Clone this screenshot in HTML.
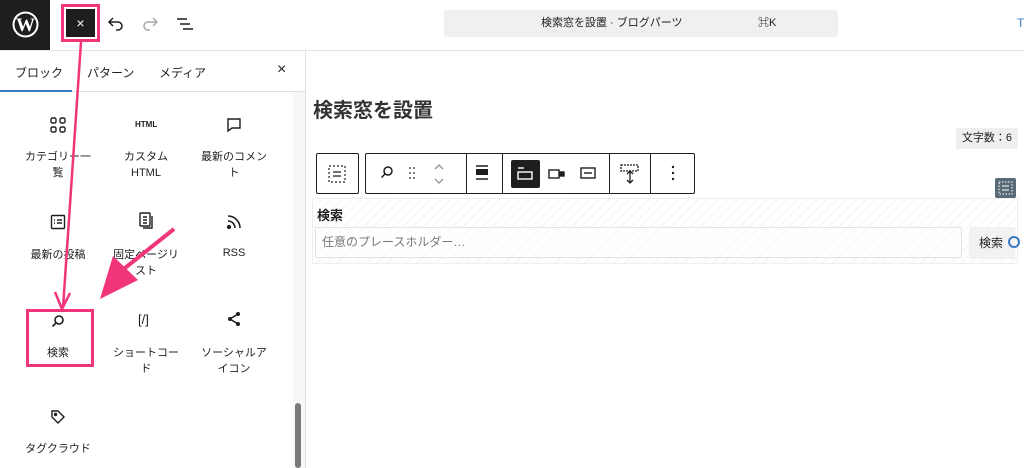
<!DOCTYPE html>
<html><head><meta charset="utf-8"><style>
*{box-sizing:border-box;margin:0;padding:0}
body{width:1024px;height:468px;overflow:hidden;background:#fff;font-family:"Liberation Sans","Noto Sans CJK JP",sans-serif;color:#1e1e1e;position:relative}
.a{position:absolute}
.lbl{position:absolute;width:90px;text-align:center;font-size:11px;line-height:16px;color:#1e1e1e}
.ic{position:absolute}
</style></head><body>
<div class="a" style="left:0;top:0;width:50px;height:50px;background:#1e1e1e"></div>
<svg class="a" style="left:11px;top:10px" width="29" height="29" viewBox="0 0 29 29"><circle cx="14.5" cy="14.5" r="13" fill="#fff"/><circle cx="14.5" cy="14.5" r="11" fill="#1e1e1e"/><text x="14.5" y="21" text-anchor="middle" font-family="Liberation Serif" font-weight="bold" font-size="19" fill="#fff">W</text></svg>
<div class="a" style="left:61px;top:4px;width:39px;height:38px;border:3px solid #f0357a"></div>
<div class="a" style="left:66px;top:9px;width:29px;height:28px;background:#1e1e1e;color:#fff;font-size:14px;text-align:center;line-height:28px">×</div>
<svg class="a" style="left:106px;top:15px" width="20" height="18" viewBox="0 0 20 18"><path d="M4 7h8a4 4 0 0 1 0 8h-2M7 3L3 7l4 4" fill="none" stroke="#1e1e1e" stroke-width="1.5"/></svg>
<svg class="a" style="left:140px;top:15px" width="20" height="18" viewBox="0 0 20 18"><path d="M16 7H8a4 4 0 0 0 0 8h2M13 3l4 4-4 4" fill="none" stroke="#aaa" stroke-width="1.5"/></svg>
<svg class="a" style="left:175px;top:16px" width="20" height="16" viewBox="0 0 20 16"><path d="M2 3h10M5 8h10M8 13h10" stroke="#1e1e1e" stroke-width="1.5"/></svg>
<div class="a" style="left:444px;top:10px;width:394px;height:27px;background:#f0f0f0;border-radius:3px;font-size:11px;line-height:27px;color:#1e1e1e"><span class="a" style="left:97px">検索窓を設置 · ブログパーツ</span><span class="a" style="left:314px">⌘K</span></div>
<div class="a" style="left:1017px;top:16px;color:#3a7ac4;font-size:12px">T</div>
<div class="a" style="left:0;top:50px;width:1024px;height:1px;background:#e4e4e4"></div>
<div class="a" style="left:305px;top:50px;width:1px;height:418px;background:#e0e0e0"></div>
<div class="a" style="left:293px;top:92px;width:12px;height:376px;background:#f7f7f7"></div>
<div class="a" style="left:295px;top:403px;width:6px;height:65px;background:#7a7a7a;border-radius:3px"></div>
<div class="a" style="left:15px;top:64px;font-size:12px">ブロック</div>
<div class="a" style="left:87px;top:64px;font-size:12px">パターン</div>
<div class="a" style="left:159px;top:64px;font-size:12px">メディア</div>
<div class="a" style="left:277px;top:61px;font-size:16px">×</div>
<div class="a" style="left:0;top:91px;width:305px;height:1px;background:#e0e0e0"></div>
<div class="a" style="left:0;top:90px;width:72px;height:2px;background:#3a7ac4"></div>
<svg class="ic" style="left:50px;top:117px" width="16" height="16" viewBox="0 0 16 16" fill="none" stroke="#1e1e1e" stroke-width="1.4"><rect x="1" y="1" width="5" height="5" rx="1.5"/><rect x="10" y="1" width="5" height="5" rx="1.5"/><rect x="1" y="10" width="5" height="5" rx="1.5"/><rect x="10" y="10" width="5" height="5" rx="1.5"/></svg>
<div class="a" style="left:135px;top:120px;font-size:8px;font-weight:bold">HTML</div>
<svg class="ic" style="left:226px;top:117px" width="16" height="16" viewBox="0 0 16 16" fill="none" stroke="#1e1e1e" stroke-width="1.4"><path d="M2 2h12v9H6l-4 3z"/></svg>
<div class="lbl" style="left:13px;top:149px">カテゴリー一<br>覧</div>
<div class="lbl" style="left:101px;top:149px">カスタム<br>HTML</div>
<div class="lbl" style="left:189px;top:149px">最新のコメン<br>ト</div>
<svg class="ic" style="left:50px;top:214px" width="16" height="16" viewBox="0 0 16 16" fill="none" stroke="#1e1e1e" stroke-width="1.4"><rect x="1.5" y="1.5" width="13" height="13" rx="1"/><path d="M4 6h1M7 6h5M4 9h1M7 9h5"/></svg>
<svg class="ic" style="left:138px;top:212px" width="16" height="18" viewBox="0 0 16 18" fill="none" stroke="#1e1e1e" stroke-width="1.4"><rect x="2" y="1" width="10" height="13" rx="1"/><path d="M5 5h4M5 8h4M5 11h4M14 4v12H5"/></svg>
<svg class="ic" style="left:226px;top:214px" width="16" height="16" viewBox="0 0 16 16" fill="none" stroke="#1e1e1e" stroke-width="1.6"><path d="M2 7a7 7 0 0 1 7 7M2 2a12 12 0 0 1 12 12"/><circle cx="3" cy="13" r="1.3" fill="#1e1e1e"/></svg>
<div class="lbl" style="left:13px;top:247px">最新の投稿</div>
<div class="lbl" style="left:101px;top:247px">固定ページリ<br>スト</div>
<div class="lbl" style="left:189px;top:245px">RSS</div>
<div class="a" style="left:26px;top:309px;width:68px;height:58px;border:3px solid #f0357a"></div>
<svg class="ic" style="left:51px;top:314px" width="14" height="14" viewBox="0 0 14 14" fill="none" stroke="#1e1e1e" stroke-width="1.6"><circle cx="8" cy="6" r="4"/><path d="M5 9l-3.5 3.5"/></svg>
<div class="a" style="left:138px;top:312px;font-size:13px">[/]</div>
<svg class="ic" style="left:226px;top:311px" width="16" height="16" viewBox="0 0 16 16"><path d="M12 3L4 8l8 5" fill="none" stroke="#1e1e1e" stroke-width="1.5"/><circle cx="12" cy="3" r="2" fill="#1e1e1e"/><circle cx="4" cy="8" r="2" fill="#1e1e1e"/><circle cx="12" cy="13" r="2" fill="#1e1e1e"/></svg>
<div class="lbl" style="left:13px;top:345px">検索</div>
<div class="lbl" style="left:101px;top:345px">ショートコー<br>ド</div>
<div class="lbl" style="left:189px;top:345px">ソーシャルア<br>イコン</div>
<svg class="ic" style="left:50px;top:409px" width="16" height="16" viewBox="0 0 16 16" fill="none" stroke="#1e1e1e" stroke-width="1.4"><path d="M2 2h6l6 6-6 6-6-6z"/><circle cx="5.5" cy="5.5" r="1" fill="#1e1e1e"/></svg>
<div class="lbl" style="left:13px;top:441px">タグクラウド</div>
<svg class="a" style="left:0;top:0" width="310" height="468"><path d="M81 42L63 308" stroke="#f0357a" stroke-width="2.5" fill="none"/><path d="M55 292L62 309L70 293" stroke="#f0357a" stroke-width="2.5" fill="none"/><path d="M174 229L125 268" stroke="#f0357a" stroke-width="4"/><path d="M100 299L113 256L138 280Z" fill="#f0357a"/></svg>
<div class="a" style="left:313px;top:94px;font-size:20px;font-weight:bold;color:#333">検索窓を設置</div>
<div class="a" style="left:956px;top:128px;width:62px;height:21px;background:#efefef;font-size:11px;line-height:21px;text-align:center">文字数：6</div>
<div class="a" style="left:316px;top:153px;width:43px;height:41px;border:1px solid #1e1e1e;border-radius:2px"></div>
<svg class="a" style="left:327px;top:164px" width="20" height="20" viewBox="0 0 20 20" fill="none" stroke="#1e1e1e" stroke-width="1.2"><rect x="2" y="2" width="16" height="16" stroke-dasharray="2 2"/><path d="M6 8h8M6 12h8"/></svg>
<div class="a" style="left:365px;top:153px;width:330px;height:41px;border:1px solid #1e1e1e;border-radius:2px"></div>
<div class="a" style="left:466px;top:154px;width:1px;height:39px;background:#1e1e1e"></div>
<div class="a" style="left:502px;top:154px;width:1px;height:39px;background:#1e1e1e"></div>
<div class="a" style="left:609px;top:154px;width:1px;height:39px;background:#1e1e1e"></div>
<div class="a" style="left:650px;top:154px;width:1px;height:39px;background:#1e1e1e"></div>
<svg class="a" style="left:380px;top:165px" width="14" height="14" viewBox="0 0 14 14" fill="none" stroke="#1e1e1e" stroke-width="1.5"><circle cx="8" cy="6" r="4"/><path d="M5 9l-3.5 3.5"/></svg>
<svg class="a" style="left:408px;top:166px" width="8" height="14" fill="#555"><circle cx="2" cy="2" r="1"/><circle cx="6" cy="2" r="1"/><circle cx="2" cy="7" r="1"/><circle cx="6" cy="7" r="1"/><circle cx="2" cy="12" r="1"/><circle cx="6" cy="12" r="1"/></svg>
<svg class="a" style="left:433px;top:163px" width="12" height="22" fill="none" stroke="#888" stroke-width="1.2"><path d="M2 6l4-4 4 4M2 16l4 4 4-4"/></svg>
<svg class="a" style="left:475px;top:165px" width="14" height="16"><rect x="1" y="4" width="12" height="6" fill="#1e1e1e"/><path d="M1 1h12M1 14h12" stroke="#1e1e1e" stroke-width="1.5"/></svg>
<div class="a" style="left:511px;top:160px;width:29px;height:28px;background:#1e1e1e;border-radius:2px"></div>
<svg class="a" style="left:517px;top:166px" width="16" height="16" fill="none" stroke="#fff" stroke-width="1.4"><path d="M1 2h6"/><rect x="1" y="6" width="14" height="7"/></svg>
<svg class="a" style="left:548px;top:168px" width="18" height="12" fill="none" stroke="#1e1e1e" stroke-width="1.4"><rect x="1" y="2" width="10" height="8"/><rect x="12" y="4" width="4" height="4" fill="#1e1e1e"/></svg>
<svg class="a" style="left:580px;top:167px" width="16" height="12" fill="none" stroke="#1e1e1e" stroke-width="1.4"><rect x="1" y="1" width="14" height="10"/><path d="M4 6h8"/></svg>
<svg class="a" style="left:620px;top:162px" width="20" height="22" fill="none" stroke="#1e1e1e" stroke-width="1.3"><rect x="1" y="3" width="17" height="6" stroke-dasharray="2 1"/><path d="M10 10v10M7 12l3-3 3 3M7 18l3 3 3-3"/></svg>
<svg class="a" style="left:670px;top:165px" width="6" height="16" fill="#1e1e1e"><circle cx="3" cy="2" r="1.2"/><circle cx="3" cy="8" r="1.2"/><circle cx="3" cy="14" r="1.2"/></svg>
<div class="a" style="left:995px;top:178px;width:21px;height:20px;background:#5a6b78;border-radius:2px"></div>
<svg class="a" style="left:998px;top:181px" width="15" height="14" fill="none" stroke="#fff" stroke-width="1"><rect x="1" y="1" width="13" height="12" stroke-dasharray="1.5 1.5"/><path d="M4 5h7M4 9h7"/></svg>
<div class="a" style="left:312px;top:198px;width:706px;height:66px;border:1px solid #eee;background:repeating-linear-gradient(135deg,#fff 0 6px,#f3f3f3 6px 7px)"></div>
<div class="a" style="left:317px;top:205px;font-size:13px;font-weight:bold">検索</div>
<div class="a" style="left:315px;top:227px;width:647px;height:31px;border:1px solid #e2e2e2;border-radius:2px;background:rgba(255,255,255,.5);font-size:12px;line-height:29px;padding-left:6px;color:#777">任意のプレースホルダー…</div>
<div class="a" style="left:969px;top:227px;width:46px;height:32px;background:#f2f2f2;border-radius:2px;font-size:12px;line-height:32px;padding-left:10px">検索</div>
<div class="a" style="left:1008px;top:236px;width:12px;height:12px;border:2px solid #3a7ac4;border-radius:50%"></div>
</body></html>
